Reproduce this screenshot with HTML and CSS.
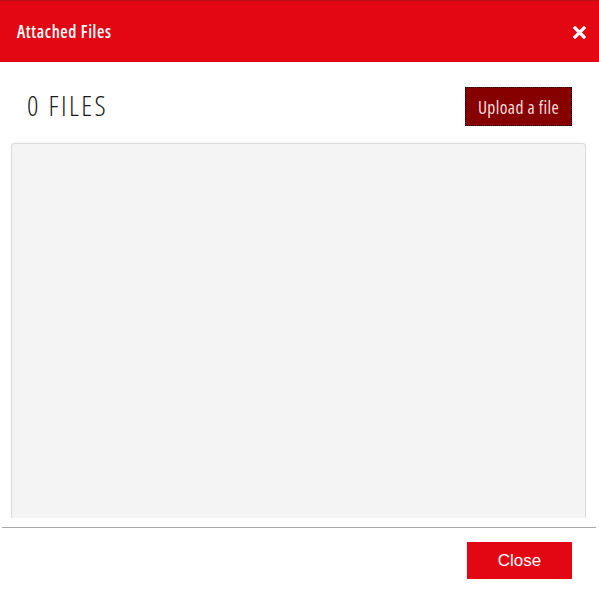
FILE: index.html
```html
<!DOCTYPE html>
<html>
<head>
<meta charset="utf-8">
<link rel="stylesheet" href="styles.css">
</head>
<body>
<div class="backdrop"></div>
<div class="modal">
  <header class="modal-header">
    <h1 class="modal-title">Attached Files</h1>
    <button class="icon-close" aria-label="Close">
      <svg width="13" height="13" viewBox="0 0 13 13"><path d="M2 2 L11 11 M11 2 L2 11" stroke="#fff" stroke-width="3.2" stroke-linecap="square"/></svg>
    </button>
  </header>
  <div class="modal-body">
    <div class="files-head">
      <h2 class="files-count">0 FILES</h2>
      <button class="upload-btn">Upload a file</button>
    </div>
    <div class="files-panel"></div>
  </div>
  <footer class="modal-footer">
    <button class="close-btn">Close</button>
  </footer>
</div>
</body>
</html>
```
FILE: styles.css
```css
html, body {
  margin: 0;
  padding: 0;
  background: #fff;
  width: 599px;
  height: 601px;
  overflow: hidden;
}
.backdrop {
  height: 1px;
  background: #b8111b;
}
.modal {
  display: flex;
  flex-direction: column;
}
.modal-header {
  height: 61px;
  background: #e30613;
  display: flex;
  align-items: center;
  justify-content: space-between;
  padding: 0 13px 0 17px;
}
.modal-title {
  margin: 0;
  font-family: "Open Sans", sans-serif;
  font-stretch: 75%;
  font-weight: 600;
  font-size: 17px;
  color: #fff;
  letter-spacing: 0.6px;
}
.icon-close {
  border: 0;
  background: none;
  padding: 0;
  width: 13px;
  height: 13px;
  display: flex;
  margin-top: 2px;
}
.modal-body {
  padding: 0 13px 0 11px;
  height: 456px;
  overflow: hidden;
}
.files-head {
  display: flex;
  justify-content: space-between;
  align-items: center;
  height: 81px;
  padding: 0 14px 0 16px;
}
.files-count {
  margin: 0;
  font-family: "Open Sans", sans-serif;
  font-stretch: 75%;
  font-weight: 300;
  font-size: 28px;
  color: #1a1a1a;
  letter-spacing: 2.4px;
  margin-top: 5px;
}
.upload-btn {
  width: 107px;
  height: 39px;
  background: #870000;
  border: 1px dotted #000;
  color: #f6dede;
  font-family: "Open Sans", sans-serif;
  font-stretch: 75%;
  font-size: 17.5px;
  letter-spacing: 0.4px;
  padding: 0;
  margin-top: 8px;
}
.files-panel {
  height: 380px;
  background: #f4f4f4;
  border: 1px solid #dcdcdc;
  border-bottom: 0;
  border-radius: 4px 4px 0 0;
  box-shadow: 0 -1px 2px rgba(0,0,0,0.05);
}
.modal-footer {
  margin: 9px 3px 0 2px;
  border-top: 1px solid #aaa;
  display: flex;
  justify-content: flex-end;
  padding: 14px 24px 0 0;
}
.close-btn {
  width: 105px;
  height: 37px;
  background: #e30613;
  border: 0;
  color: #fff;
  font-family: "Liberation Sans", Arial, sans-serif;
  font-size: 17px;
  padding: 0;
}
```
